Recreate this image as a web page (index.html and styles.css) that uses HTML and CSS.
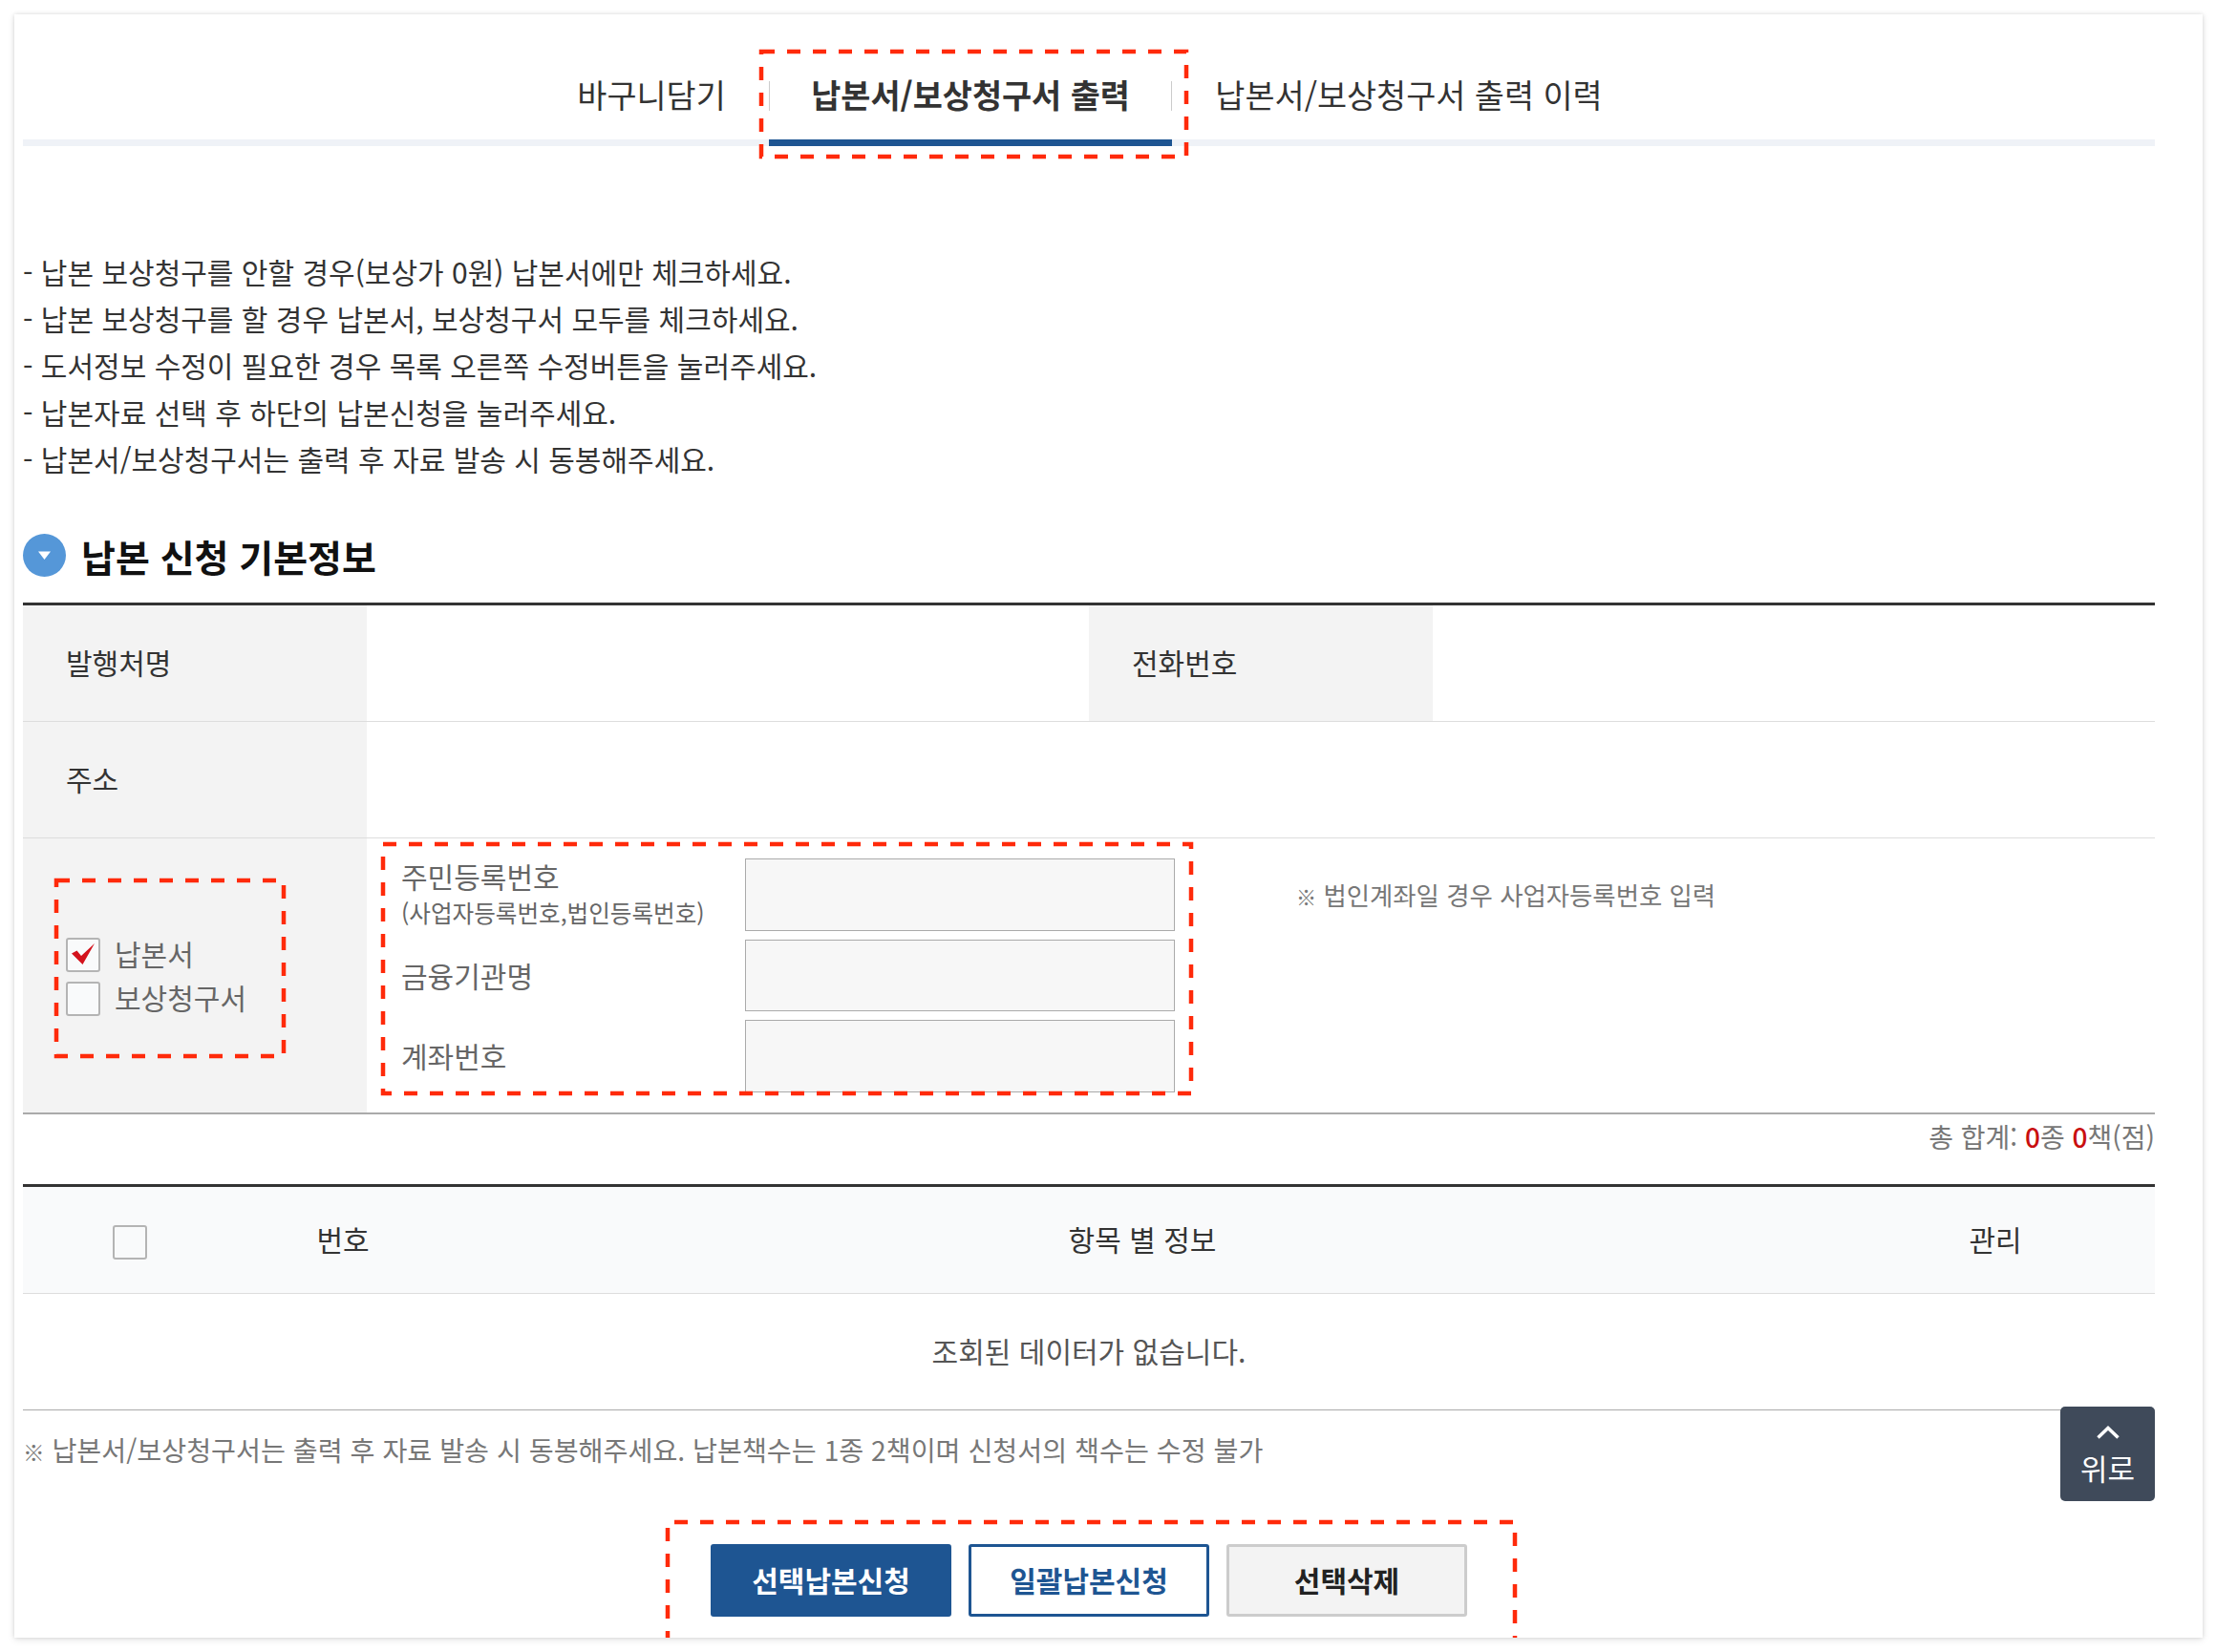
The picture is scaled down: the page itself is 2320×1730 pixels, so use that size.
FILE: index.html
```html
<!DOCTYPE html>
<html lang="ko">
<head>
<meta charset="utf-8">
<title>납본서/보상청구서 출력</title>
<link rel="stylesheet" href="styles.css">
</head>
<body>
<main class="card">
  <nav class="tabs">
    <a class="tab">바구니담기</a>
    <a class="tab tab-active">납본서/보상청구서 출력</a>
    <a class="tab">납본서/보상청구서 출력 이력</a>
  </nav>

  <ul class="guide">
    <li>- 납본 보상청구를 안할 경우(보상가 0원) 납본서에만 체크하세요.</li>
    <li>- 납본 보상청구를 할 경우 납본서, 보상청구서 모두를 체크하세요.</li>
    <li>- 도서정보 수정이 필요한 경우 목록 오른쪽 수정버튼을 눌러주세요.</li>
    <li>- 납본자료 선택 후 하단의 납본신청을 눌러주세요.</li>
    <li>- 납본서/보상청구서는 출력 후 자료 발송 시 동봉해주세요.</li>
  </ul>

  <h2 class="section-title">
    <svg class="section-icon" viewBox="0 0 45 45"><circle cx="22.5" cy="22.5" r="22.5" fill="#5597d8"/><path d="M16 18.500h13l-6.500 8.500z" fill="#fff"/></svg>
    납본 신청 기본정보
  </h2>

  <section class="info">
    <div class="info-row">
      <div class="th">발행처명</div>
      <div class="td td-half"></div>
      <div class="th">전화번호</div>
      <div class="td"></div>
    </div>
    <div class="info-row">
      <div class="th">주소</div>
      <div class="td"></div>
    </div>
    <div class="info-row info-row-form">
      <div class="th th-checks">
        <label class="check-line"><span class="box box-on"><svg viewBox="0 0 32 32"><path d="M4 14.500l5.500-3L14 17 28 4 15.500 26z" fill="#d3121c"/></svg></span><span class="check-text">납본서</span></label>
        <label class="check-line"><span class="box"></span><span class="check-text">보상청구서</span></label>
      </div>
      <div class="form-grid">
        <div class="form-label">주민등록번호<small>(사업자등록번호,법인등록번호)</small></div>
        <div class="field"></div>
        <div class="form-note"><span class="ref-mark">※</span> 법인계좌일 경우 사업자등록번호 입력</div>
        <div class="form-label">금융기관명</div>
        <div class="field"></div>
        <div></div>
        <div class="form-label">계좌번호</div>
        <div class="field"></div>
        <div></div>
      </div>
    </div>
  </section>

  <div class="total">총 합계: <b>0</b>종 <b>0</b>책(점)</div>

  <section class="list">
    <div class="list-head">
      <div class="cell"><span class="box box-head"></span></div>
      <div class="cell">번호</div>
      <div class="cell">항목 별 정보</div>
      <div class="cell">관리</div>
    </div>
    <div class="list-empty">조회된 데이터가 없습니다.</div>
  </section>

  <p class="foot-note"><span class="ref-mark">※</span> 납본서/보상청구서는 출력 후 자료 발송 시 동봉해주세요. 납본책수는 1종 2책이며 신청서의 책수는 수정 불가</p>

  <div class="actions">
    <button class="btn btn-primary">선택납본신청</button>
    <button class="btn btn-outline">일괄납본신청</button>
    <button class="btn btn-gray">선택삭제</button>
  </div>

  <a class="to-top">
    <svg viewBox="0 0 24 14"><path d="M1.500 12.500 12 2.500l10.500 10" fill="none" stroke="#fff" stroke-width="3.500"/></svg>
    <span class="to-top-label">위로</span>
  </a>

  <svg class="marks" viewBox="0 0 2290 1700">
    <rect x="782" y="39" width="445" height="110"/>
    <rect x="44" y="907" width="238" height="184"/>
    <rect x="386" y="869" width="846" height="261"/>
    <path d="M684 1707V1579H1571V1707"/>
  </svg>
</main>
</body>
</html>
```
FILE: styles.css
```css
* { box-sizing: border-box; }

html, body {
  margin: 0;
  padding: 0;
  background: #fff;
}

body {
  width: 2320px;
  height: 1730px;
  overflow: hidden;
  padding: 15px;
  font-family: "Noto Sans CJK KR", "Noto Sans", sans-serif;
  font-size: 30px;
  color: #333;
}

.card {
  position: relative;
  width: 2291px;
  height: 1700px;
  padding: 0 50px 0 9px;
  background: #fff;
  box-shadow: 0 0 4px rgba(0, 0, 0, .12), 0 2px 8px rgba(0, 0, 0, .1);
  overflow: hidden;
}

/* tabs */
.tabs {
  display: flex;
  justify-content: center;
  height: 138px;
  padding: 61px 0 0 2px;
  border-bottom: 7px solid #eff2f7;
}

.tab {
  position: relative;
  height: 70px;
  padding: 0 45px;
  font-size: 33.8px;
  line-height: 46px;
  color: #333;
}

.tab-active {
  height: 77px;
  padding: 0 44.500px;
  font-weight: 700;
  border-bottom: 7px solid #1e5592;
  white-space: nowrap;
}

.tab-active::before,
.tab-active::after {
  content: "";
  position: absolute;
  top: 9px;
  width: 1px;
  height: 31px;
  background: #ccc;
}

.tab-active::before { left: 0; }
.tab-active::after { right: 0; }

/* guide */
.guide {
  margin: 107px 0 0;
  padding: 0;
  list-style: none;
  line-height: 49px;
  font-size: 30px;
  color: #333;
}

/* section title */
.section-title {
  display: flex;
  align-items: center;
  gap: 16px;
  height: 45px;
  margin: 54px 0 0;
  font-size: 39px;
  font-weight: 700;
  color: #111;
}

.section-icon {
  width: 45px;
  height: 45px;
}

/* info table */
.info {
  margin-top: 27px;
  border-top: 3px solid #333;
  border-bottom: 2px solid #aaa;
}

.info-row {
  display: flex;
  height: 122px;
  border-bottom: 1px solid #ddd;
}

.info-row-form {
  height: 287px;
  border-bottom: 0;
}

.th {
  display: flex;
  align-items: center;
  flex: 0 0 360px;
  padding: 0 0 3px 45px;
  background: #f3f3f3;
}

.td { flex: 1; }
.td-half { flex: 0 0 756px; }

.th-checks {
  flex-direction: column;
  align-items: flex-start;
  gap: 10px;
  padding: 104px 0 0 45px;
}

.check-line {
  display: flex;
  align-items: center;
  gap: 15px;
  height: 36px;
  color: #666;
  font-size: 30px;
}

.check-text {
  margin-bottom: 5px;
}

.box {
  display: block;
  flex: none;
  width: 36px;
  height: 36px;
  border: 2px solid #b4b4b4;
  border-radius: 3px;
  background: #f9fafb;
}

.box svg {
  display: block;
  width: 32px;
  height: 32px;
}

.box-head {
  margin-top: 8px;
}

.form-grid {
  display: grid;
  grid-template-columns: 360px 450px 1fr;
  grid-template-rows: 76px 75px 76px;
  row-gap: 9px;
  flex: 1;
  padding: 21px 0 0 36px;
}

.form-label {
  align-self: center;
  padding-bottom: 2px;
  color: #666;
  line-height: 38px;
}

.form-label small {
  display: block;
  font-size: 24.6px;
}

.field {
  background: #f7f7f7;
  border: 1px solid #aaa;
}

.form-note {
  align-self: center;
  padding: 0 0 2px 127px;
  font-size: 26.4px;
  color: #777;
}

.ref-mark {
  font-size: .8em;
}

/* total */
.total {
  height: 73px;
  font-size: 28px;
  line-height: 46px;
  text-align: right;
  color: #777;
}

.total b {
  font-weight: 500;
  color: #c90f0f;
}

/* list */
.list {
  border-top: 3px solid #333;
  border-bottom: 1px solid #aaa;
}

.list-head {
  display: grid;
  grid-template-columns: 224px 222px 1452px 1fr;
  height: 112px;
  background: #f9fafb;
  border-bottom: 1px solid #ddd;
}

.cell {
  display: flex;
  align-items: center;
  justify-content: center;
  padding-bottom: 3px;
}

.list-empty {
  height: 121px;
  line-height: 118px;
  text-align: center;
  color: #555;
}

.foot-note {
  margin: 18px 0 0;
  font-size: 28.2px;
  line-height: 46px;
  color: #777;
}

/* actions */
.actions {
  display: flex;
  justify-content: center;
  gap: 18px;
  margin-top: 74px;
}

.btn {
  width: 252px;
  height: 76px;
  padding: 0 0 2px;
  border: 3px solid #1e5592;
  border-radius: 3px;
  font: 700 30px "Noto Sans CJK KR", "Noto Sans", sans-serif;
}

.btn-primary { background: #1e5592; color: #fff; }
.btn-outline { background: #fff; color: #1e5592; }
.btn-gray { background: #f3f3f3; border-color: #ccc; color: #222; }

/* overlays */
.to-top {
  position: absolute;
  top: 1458px;
  left: 2142px;
  display: flex;
  flex-direction: column;
  align-items: center;
  width: 99px;
  height: 99px;
  padding-top: 20px;
  border-radius: 5px;
  background: #3f4a5a;
  color: #fff;
  font-size: 31px;
  line-height: 44px;
}

.to-top svg {
  flex: none;
  width: 24px;
  height: 14px;
}

.to-top-label {
  margin-top: 8px;
}

.marks {
  position: absolute;
  top: 0;
  left: 0;
  width: 2290px;
  height: 1700px;
  pointer-events: none;
}

.marks rect,
.marks path {
  fill: none;
  stroke: #ff2a0a;
  stroke-width: 4.5;
  stroke-dasharray: 14 13;
}
```
